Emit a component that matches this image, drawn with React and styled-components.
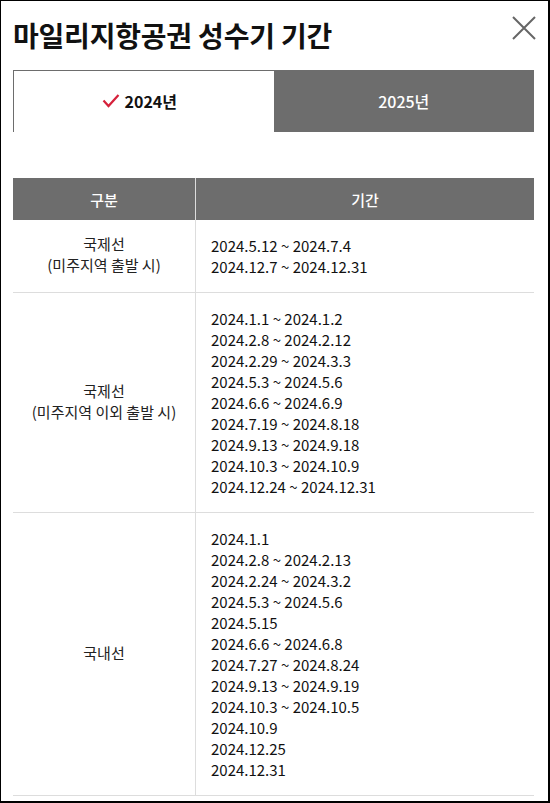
import React from "react";
import styled, { createGlobalStyle } from "styled-components";

const Global = createGlobalStyle`
  html, body { margin: 0; padding: 0; background: #fff; }
  * { box-sizing: border-box; }
  body { font-family: "Noto Sans CJK KR", "Noto Sans", sans-serif; color: #111; }
`;

const Frame = styled.div`
  width: 550px;
  height: 803px;
  border-style: solid;
  border-color: #000;
  border-width: 1px 2px 2px 1px;
  overflow: hidden;
  padding: 0 14px 0 12px;
  background: #fff;
`;

const Header = styled.div`
  display: flex;
  justify-content: space-between;
  align-items: center;
  height: 69px;
  padding-bottom: 2px;
`;

const Title = styled.h1`
  margin: 0;
  font-size: 28px;
  font-weight: 700;
  letter-spacing: -0.2px;
  color: #111;
`;

const Close = styled.button`
  border: 0;
  background: none;
  padding: 0;
  width: 26px;
  height: 26px;
  margin-right: -3px;
  margin-top: -13px;
  display: flex;
  align-items: center;
  justify-content: center;
  cursor: pointer;
`;

const Tabs = styled.div`
  display: grid;
  grid-template-columns: 1fr 1fr;
  height: 62px;
`;

const Tab = styled.div`
  display: flex;
  align-items: center;
  justify-content: center;
  gap: 5px;
  font-size: 16px;
  font-weight: ${(p) => (p.$active ? 700 : 500)};
  color: ${(p) => (p.$active ? "#111" : "#fff")};
  background: ${(p) => (p.$active ? "#fff" : "#6d6d6d")};
  border-top: 1px solid #6d6d6d;
  border-left: ${(p) => (p.$active ? "1px solid #6d6d6d" : "0")};
  padding-right: ${(p) => (p.$active ? "9px" : "0")};
  padding-bottom: 2px;
`;

const Table = styled.div`
  margin-top: 46px;
  display: grid;
  grid-template-columns: 182px 1fr;
  border-bottom: 1px solid #ddd;
`;

const Th = styled.div`
  height: 42px;
  background: #6d6d6d;
  color: #fff;
  font-size: 15px;
  font-weight: 500;
  display: flex;
  align-items: center;
  justify-content: center;
  border-left: ${(p) => (p.$divided ? "1px solid #ddd" : "0")};
`;

const Label = styled.div`
  display: flex;
  flex-direction: column;
  align-items: center;
  justify-content: center;
  text-align: center;
  font-size: 15px;
  line-height: 21px;
  color: #222;
  border-top: ${(p) => (p.$first ? "0" : "1px solid #ddd")};
  padding: 0 0 4px;
`;

const Periods = styled.div`
  display: flex;
  flex-direction: column;
  padding: 15px 16px 15px 15px;
  font-size: 15px;
  line-height: 21px;
  color: #111;
  border-left: 1px solid #ddd;
  border-top: ${(p) => (p.$first ? "0" : "1px solid #ddd")};
`;

const rows = [
  {
    label: ["국제선", "(미주지역 출발 시)"],
    periods: ["2024.5.12 ~ 2024.7.4", "2024.12.7 ~ 2024.12.31"],
  },
  {
    label: ["국제선", "(미주지역 이외 출발 시)"],
    periods: [
      "2024.1.1 ~ 2024.1.2",
      "2024.2.8 ~ 2024.2.12",
      "2024.2.29 ~ 2024.3.3",
      "2024.5.3 ~ 2024.5.6",
      "2024.6.6 ~ 2024.6.9",
      "2024.7.19 ~ 2024.8.18",
      "2024.9.13 ~ 2024.9.18",
      "2024.10.3 ~ 2024.10.9",
      "2024.12.24 ~ 2024.12.31",
    ],
  },
  {
    label: ["국내선"],
    periods: [
      "2024.1.1",
      "2024.2.8 ~ 2024.2.13",
      "2024.2.24 ~ 2024.3.2",
      "2024.5.3 ~ 2024.5.6",
      "2024.5.15",
      "2024.6.6 ~ 2024.6.8",
      "2024.7.27 ~ 2024.8.24",
      "2024.9.13 ~ 2024.9.19",
      "2024.10.3 ~ 2024.10.5",
      "2024.10.9",
      "2024.12.25",
      "2024.12.31",
    ],
  },
];

export default function App() {
  return (
    <>
      <Global />
      <Frame>
        <Header>
          <Title>마일리지항공권 성수기 기간</Title>
          <Close aria-label="닫기">
            <svg width="24" height="24" viewBox="0 0 24 24">
              <path d="M1 1 L23 23 M23 1 L1 23" stroke="#666" strokeWidth="2" fill="none" />
            </svg>
          </Close>
        </Header>
        <Tabs>
          <Tab $active>
            <svg width="18" height="14" viewBox="0 0 18 14">
              <path d="M1.5 6.5 L6.5 12 L16.5 1" stroke="#d6213b" strokeWidth="2.2" fill="none" />
            </svg>
            <span>2024년</span>
          </Tab>
          <Tab>2025년</Tab>
        </Tabs>
        <Table>
          <Th>구분</Th>
          <Th $divided>기간</Th>
          {rows.map((r, i) => (
            <React.Fragment key={i}>
              <Label $first={i === 0}>
                {r.label.map((l) => (
                  <span key={l}>{l}</span>
                ))}
              </Label>
              <Periods $first={i === 0}>
                {r.periods.map((p) => (
                  <span key={p}>{p}</span>
                ))}
              </Periods>
            </React.Fragment>
          ))}
        </Table>
      </Frame>
    </>
  );
}
